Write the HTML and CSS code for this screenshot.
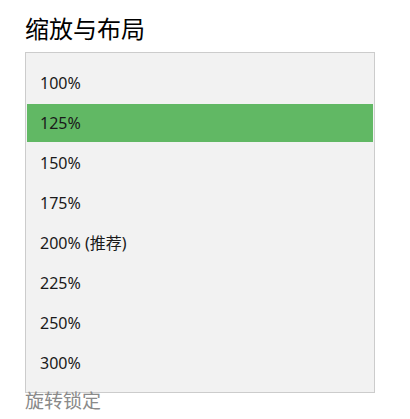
FILE: index.html
```html
<!DOCTYPE html>
<html lang="zh-CN">
<head>
    <meta charset="UTF-8">
    <title>缩放与布局</title>
    <link rel="stylesheet" href="styles.css">
</head>
<body>
    <div class="panel">
        <h1 class="title">缩放与布局</h1>

        <ul class="scale-list">
            <li class="scale-item">100%</li>
            <li class="scale-item selected">125%</li>
            <li class="scale-item">150%</li>
            <li class="scale-item">175%</li>
            <li class="scale-item">200% (推荐)</li>
            <li class="scale-item">225%</li>
            <li class="scale-item">250%</li>
            <li class="scale-item">300%</li>
        </ul>

        <div class="next-label">旋转锁定</div>
    </div>
</body>
</html>
```

FILE: styles.css
```css
body {
    margin: 0;
    background: #fff;
    font-family: "Noto Sans", "Noto Sans CJK SC", sans-serif;
    color: #1a1a1a;
}
.panel { padding: 14px 0 0 25px; width: 350px; }
.title {
    margin: 0 0 8px 0;
    font-size: 24px;
    font-weight: normal;
    line-height: 30px;
    color: #000;
}
.scale-list {
    display: flex;
    flex-direction: column;
    list-style: none;
    margin: 0;
    padding: 10px 0 9px 0;
    background: #f2f2f2;
    border: 1px solid #cccccc;
}
.scale-item {
    height: 38px;
    line-height: 38px;
    margin: 1px;
    padding-left: 13px;
    font-size: 16px;
}
.scale-item.selected {
    background: #61b864;
}
.next-label {
    font-size: 19px;
    line-height: 20px;
    color: #8a8a8a;
    margin-top: -2px;
}
```
